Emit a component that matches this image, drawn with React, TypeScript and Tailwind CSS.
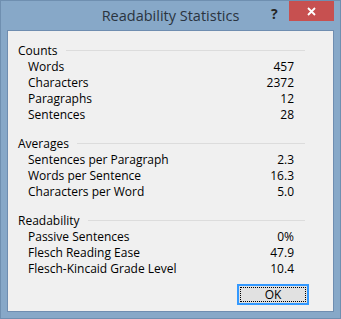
import type { ReactNode } from 'react';

type Stat = { label: string; value: string };

const sections: { title: string; rows: Stat[] }[] = [
  {
    title: 'Counts',
    rows: [
      { label: 'Words', value: '457' },
      { label: 'Characters', value: '2372' },
      { label: 'Paragraphs', value: '12' },
      { label: 'Sentences', value: '28' },
    ],
  },
  {
    title: 'Averages',
    rows: [
      { label: 'Sentences per Paragraph', value: '2.3' },
      { label: 'Words per Sentence', value: '16.3' },
      { label: 'Characters per Word', value: '5.0' },
    ],
  },
  {
    title: 'Readability',
    rows: [
      { label: 'Passive Sentences', value: '0%' },
      { label: 'Flesch Reading Ease', value: '47.9' },
      { label: 'Flesch-Kincaid Grade Level', value: '10.4' },
    ],
  },
];

function Group({ title, children }: { title: string; children: ReactNode }) {
  return (
    <div className="mt-[13px] first:mt-0">
      <div className="flex h-4 items-center gap-2">
        <span className="leading-4">{title}</span>
        <div className="mt-[-1px] h-px flex-1 bg-[#dcdcdc]" />
      </div>
      {children}
    </div>
  );
}

export default function App() {
  return (
    <div
      className="flex h-[319px] w-[341px] flex-col border border-[#6f8fb0] bg-[#87a8c8] text-[12px] text-black"
      style={{ fontFamily: '"Segoe UI", "Open Sans", "Noto Sans", sans-serif' }}
    >
      <div className="relative flex h-[29px] shrink-0 items-center justify-center">
        <span className="pt-px text-[14.5px] text-[#2a3440]">Readability Statistics</span>
        <span className="absolute left-[270px] top-[2px] text-[14px] font-bold text-[#252525]">?</span>
        <button className="absolute right-[6px] top-0 flex h-[20px] w-[45px] items-center justify-center bg-[#c75050]">
          <svg width="9" height="9" viewBox="0 0 9 9">
            <path d="M1 1 L8 8 M8 1 L1 8" stroke="#fff" strokeWidth="1.8" />
          </svg>
        </button>
      </div>

      <div className="mx-[6px] mb-[6px] flex flex-1 flex-col border border-[#6f8db0] bg-[#f0f0f0] pt-[12px]">
        <div className="ml-[10px] w-[287px]">
          {sections.map((s) => (
            <Group key={s.title} title={s.title}>
              {s.rows.map((r) => (
                <div key={r.label} className="flex h-4 items-center justify-between pl-[10px] pr-[11px]">
                  <span className="leading-4">{r.label}</span>
                  <span className="leading-4">{r.value}</span>
                </div>
              ))}
            </Group>
          ))}
        </div>

        <div className="mt-[7px] flex justify-end pr-[24px]">
          <button className="h-[21px] w-[72px] border-2 border-[#3399ff] bg-[#e1e1e1] p-px">
            <div className="flex h-full w-full items-center justify-center border border-dotted border-black leading-none">
              OK
            </div>
          </button>
        </div>
      </div>
    </div>
  );
}
